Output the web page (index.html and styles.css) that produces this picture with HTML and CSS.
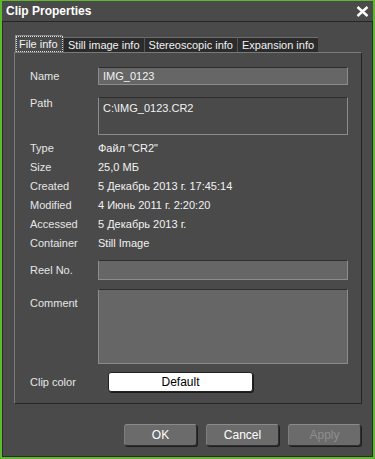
FILE: index.html
```html
<!DOCTYPE html>
<html lang="en">
<head>
    <meta charset="UTF-8">
    <title>Clip Properties</title>
    <link rel="stylesheet" href="styles.css">
</head>
<body>
    <div class="dialog">
        <div class="titlebar">
            <span class="title">Clip Properties</span>
            <svg class="close" width="13" height="11" viewBox="0 0 13 11">
                <path d="M1.5 1 L11.5 10 M11.5 1 L1.5 10" stroke="#fff" stroke-width="2.4" fill="none"/>
            </svg>
        </div>

        <div class="client">
            <div class="tabs">
                <div class="tab active"><span class="focus">File info</span></div>
                <div class="tab">Still image info</div>
                <div class="tab">Stereoscopic info</div>
                <div class="tab">Expansion info</div>
            </div>

            <div class="pane">
                <div class="row row-name">
                    <span class="label">Name</span>
                    <div class="field">IMG_0123</div>
                </div>
                <div class="row row-path">
                    <span class="label">Path</span>
                    <div class="pathbox">C:\IMG_0123.CR2</div>
                </div>
                <div class="info">
                    <div class="row info-row"><span class="label">Type</span><span class="value">Файл "CR2"</span></div>
                    <div class="row info-row"><span class="label">Size</span><span class="value">25,0 МБ</span></div>
                    <div class="row info-row"><span class="label">Created</span><span class="value">5 Декабрь 2013 г. 17:45:14</span></div>
                    <div class="row info-row"><span class="label">Modified</span><span class="value">4 Июнь 2011 г. 2:20:20</span></div>
                    <div class="row info-row"><span class="label">Accessed</span><span class="value">5 Декабрь 2013 г.</span></div>
                    <div class="row info-row"><span class="label">Container</span><span class="value">Still Image</span></div>
                </div>
                <div class="row row-reel">
                    <span class="label">Reel No.</span>
                    <div class="field reel"></div>
                </div>
                <div class="row row-comment">
                    <span class="label">Comment</span>
                    <div class="field comment"></div>
                </div>
                <div class="row row-color">
                    <span class="label">Clip color</span>
                    <button class="color-btn">Default</button>
                </div>
            </div>

            <div class="actions">
                <button class="btn">OK</button>
                <button class="btn">Cancel</button>
                <button class="btn disabled">Apply</button>
            </div>
        </div>
    </div>
</body>
</html>
```

FILE: styles.css
```css
body {
    margin: 0;
    background-color: #4a4a4a;
    font-family: "Liberation Sans", Arial, sans-serif;
    font-size: 11px;
    color: #e6e6e6;
}
.dialog {
    width: 375px;
    height: 459px;
    box-sizing: border-box;
    border: 2px solid #5dba2c;
    border-top-width: 1px;
    background-color: #4a4a4a;
    display: flex;
    flex-direction: column;
}
.titlebar {
    height: 20px;
    border-bottom: 1px solid #262626;
    display: flex;
    align-items: center;
    justify-content: space-between;
    padding: 0 4px 0 4px;
}
.title {
    font-size: 12px;
    font-weight: bold;
    color: #fff;
    padding-left: 0;
}
.close {
    display: block;
    margin-top: 0;
}
.client {
    flex: 1;
    border: 1px solid #2b2b2b;
    border-top: none;
    padding: 13px 0 0 11px;
}
.tabs {
    display: flex;
    align-items: flex-end;
    height: 17px;
    padding-left: 1px;
}
.tab {
    height: 15px;
    line-height: 15px;
    padding: 0 4px;
    background-color: #2b2b2b;
    border-top: 1px solid #6e6e6e;
    border-left: 1px solid #555;
    color: #f2f2f2;
    box-sizing: border-box;
    white-space: nowrap;
}
.tab.active {
    height: 17px;
    background-color: #4a4a4a;
    border-top: 1px solid #8a8a8a;
    border-left: 1px solid #8a8a8a;
    border-right: 1px solid #2b2b2b;
    padding: 1px 0 0 1px;
    line-height: 14px;
    width: 48px;
}
.focus {
    display: block;
    outline: 1px dotted #ddd;
    outline-offset: 0;
    padding: 0 2px 0 2px;
    height: 14px;
}
.pane {
    width: 348px;
    height: 352px;
    box-sizing: border-box;
    border-top: 1px solid #7a7a7a;
    border-left: 1px solid #7a7a7a;
    border-right: 1px solid #262626;
    border-bottom: 1px solid #262626;
    padding: 14px 13px 11px 15px;
}
.row {
    display: flex;
}
.label {
    width: 68px;
    flex: none;
}
.field {
    width: 250px;
    height: 18px;
    box-sizing: border-box;
    background-color: #666;
    border: 1px solid #8c8c8c;
    border-top-color: #2e2e2e;
    padding-left: 4px;
    line-height: 16px;
    color: #f2f2f2;
}
.row-name {
    align-items: center;
}
.row-path {
    margin-top: 12px;
}
.row-path .label {
    padding-top: 0;
    line-height: 12px;
}
.pathbox {
    width: 250px;
    height: 38px;
    box-sizing: border-box;
    border: 1px solid #8c8c8c;
    border-top-color: #2e2e2e;
    padding: 4px 0 0 4px;
    color: #f2f2f2;
}
.info {
    margin-top: 3px;
}
.info-row {
    height: 19px;
    align-items: center;
}
.value {
    color: #f2f2f2;
}
.row-reel {
    margin-top: 8px;
    align-items: center;
}
.field.reel {
    height: 20px;
}
.row-comment {
    margin-top: 9px;
}
.row-comment .label {
    padding-top: 8px;
}
.field.comment {
    height: 75px;
}
.row-color {
    margin-top: 8px;
    align-items: center;
}
.color-btn {
    margin-left: 10px;
    width: 145px;
    height: 20px;
    background-color: #fff;
    border: 1px solid #222;
    border-radius: 3px;
    box-shadow: 1px 1px 0 #1c1c1c;
    font-family: "Liberation Sans", Arial, sans-serif;
    font-size: 12px;
    color: #000;
    padding: 0;
}
.actions {
    display: flex;
    justify-content: flex-end;
    gap: 9px;
    margin-top: 20px;
    padding-right: 11px;
}
.btn {
    width: 73px;
    height: 22px;
    background-color: #6b6b6b;
    border: 1px solid #303030;
    border-top-color: #8a8a8a;
    border-left-color: #7e7e7e;
    border-radius: 3px;
    box-shadow: 1px 1px 0 #1e1e1e;
    font-family: "Liberation Sans", Arial, sans-serif;
    font-size: 12px;
    color: #fff;
    padding: 0;
}
.btn.disabled {
    color: #8e8e8e;
}
```
